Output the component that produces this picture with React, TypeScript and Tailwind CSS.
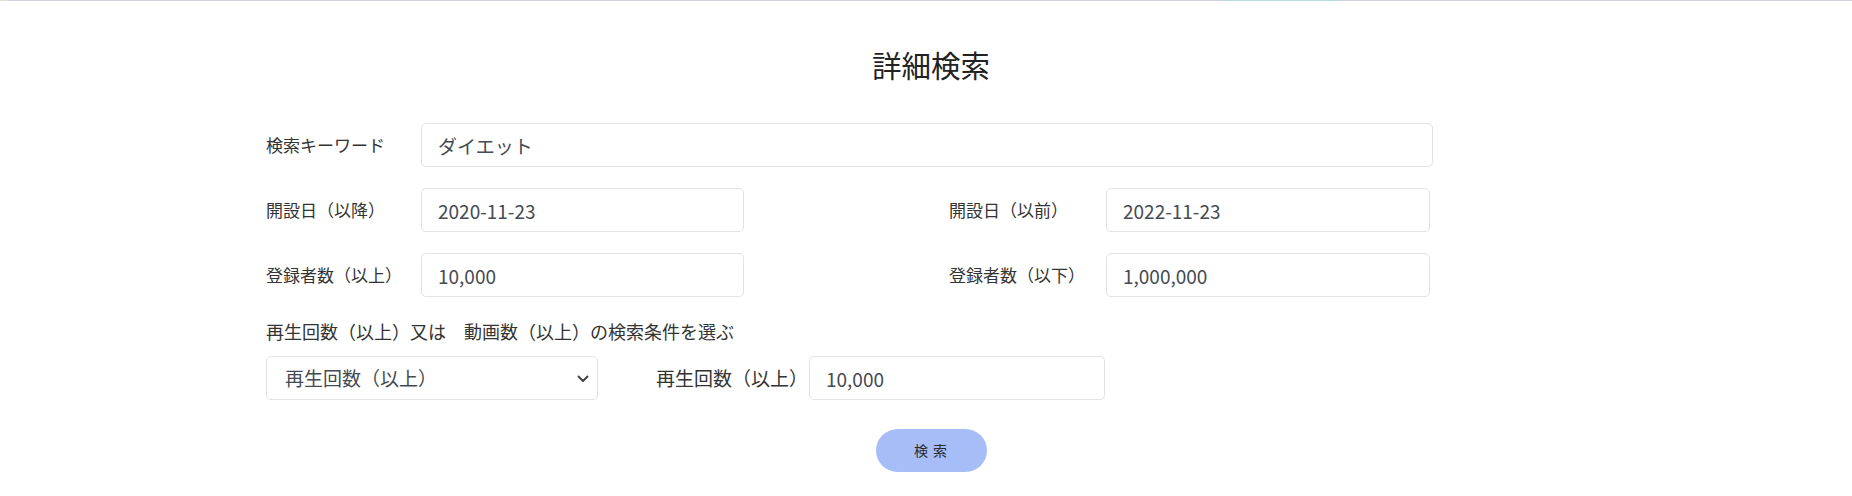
import { useState } from 'react';

const font = { fontFamily: '"Noto Sans CJK JP", "Noto Sans", sans-serif' };

function Field({ value, className }: { value: string; className: string }) {
  const [v, setV] = useState(value);
  return (
    <input
      type="text"
      value={v}
      onChange={(e) => setV(e.target.value)}
      className={`h-[44px] rounded-[5px] border border-[#dfe2e7] bg-white pl-[16px] text-[19px] text-[#454b52] outline-none ${className}`}
    />
  );
}

function Label({ text, className }: { text: string; className: string }) {
  return <div className={`shrink-0 text-[17px] text-[#333] ${className}`}>{text}</div>;
}

export default function App() {
  const [mode, setMode] = useState('play');

  return (
    <div className="min-h-[496px] bg-white [text-spacing-trim:space-all]" style={font}>
      {/* top progress line */}
      <div className="flex h-px">
        <div className="w-[8px] bg-[#e2ded2]" />
        <div className="w-[1214px] bg-[#d2cfdc]" />
        <div className="w-[118px] bg-[#b6dcd9]" />
        <div className="flex-1 bg-[#d2cfdc]" />
      </div>

      <div className="ml-[266px] w-[1330px]">
        <h1 className="mt-[41px] h-[44px] text-center text-[29.5px] leading-[44px] text-[#222]">詳細検索</h1>

        {/* keyword */}
        <div className="mt-[37px] flex items-center">
          <Label text="検索キーワード" className="w-[155px]" />
          <Field value="ダイエット" className="w-[1012px]" />
        </div>

        {/* open date */}
        <div className="mt-[21px] flex items-center">
          <Label text="開設日（以降）" className="w-[155px]" />
          <Field value="2020-11-23" className="w-[323px]" />
          <div className="w-[205px]" />
          <Label text="開設日（以前）" className="w-[157px]" />
          <Field value="2022-11-23" className="w-[324px]" />
        </div>

        {/* subscribers */}
        <div className="mt-[21px] flex items-center">
          <Label text="登録者数（以上）" className="w-[155px]" />
          <Field value="10,000" className="w-[323px]" />
          <div className="w-[205px]" />
          <Label text="登録者数（以下）" className="w-[157px]" />
          <Field value="1,000,000" className="w-[324px]" />
        </div>

        <div className="mt-[21px] h-[27px] text-[18px] leading-[27px] text-[#333]">
          再生回数（以上）又は　動画数（以上）の検索条件を選ぶ
        </div>

        <div className="mt-[11px] flex items-center">
          <div className="relative w-[332px]">
            <select
              value={mode}
              onChange={(e) => setMode(e.target.value)}
              className="h-[44px] w-full appearance-none rounded-[5px] border border-[#dfe2e7] bg-white pl-[18px] text-[19px] text-[#454b52] outline-none"
            >
              <option value="play">再生回数（以上）</option>
              <option value="video">動画数（以上）</option>
            </select>
            <svg
              className="pointer-events-none absolute right-[9px] top-[19px]"
              width="12"
              height="8"
              viewBox="0 0 12 8"
              fill="none"
            >
              <path d="M1.5 1.5 6 6l4.5-4.5" stroke="#444" strokeWidth="2" strokeLinecap="round" strokeLinejoin="round" />
            </svg>
          </div>
          <div className="w-[58px]" />
          <div className="w-[153px] shrink-0 text-[19px] text-[#333]">{mode === 'play' ? '再生回数（以上）' : '動画数（以上）'}</div>
          <Field value="10,000" className="w-[296px]" />
        </div>

        <div className="mt-[29px] flex justify-center">
          <button className="h-[43px] w-[111px] rounded-full bg-[#a6bdf7] text-[14px] tracking-[1px] text-[#2a2a2a]">検 索</button>
        </div>
      </div>
    </div>
  );
}
